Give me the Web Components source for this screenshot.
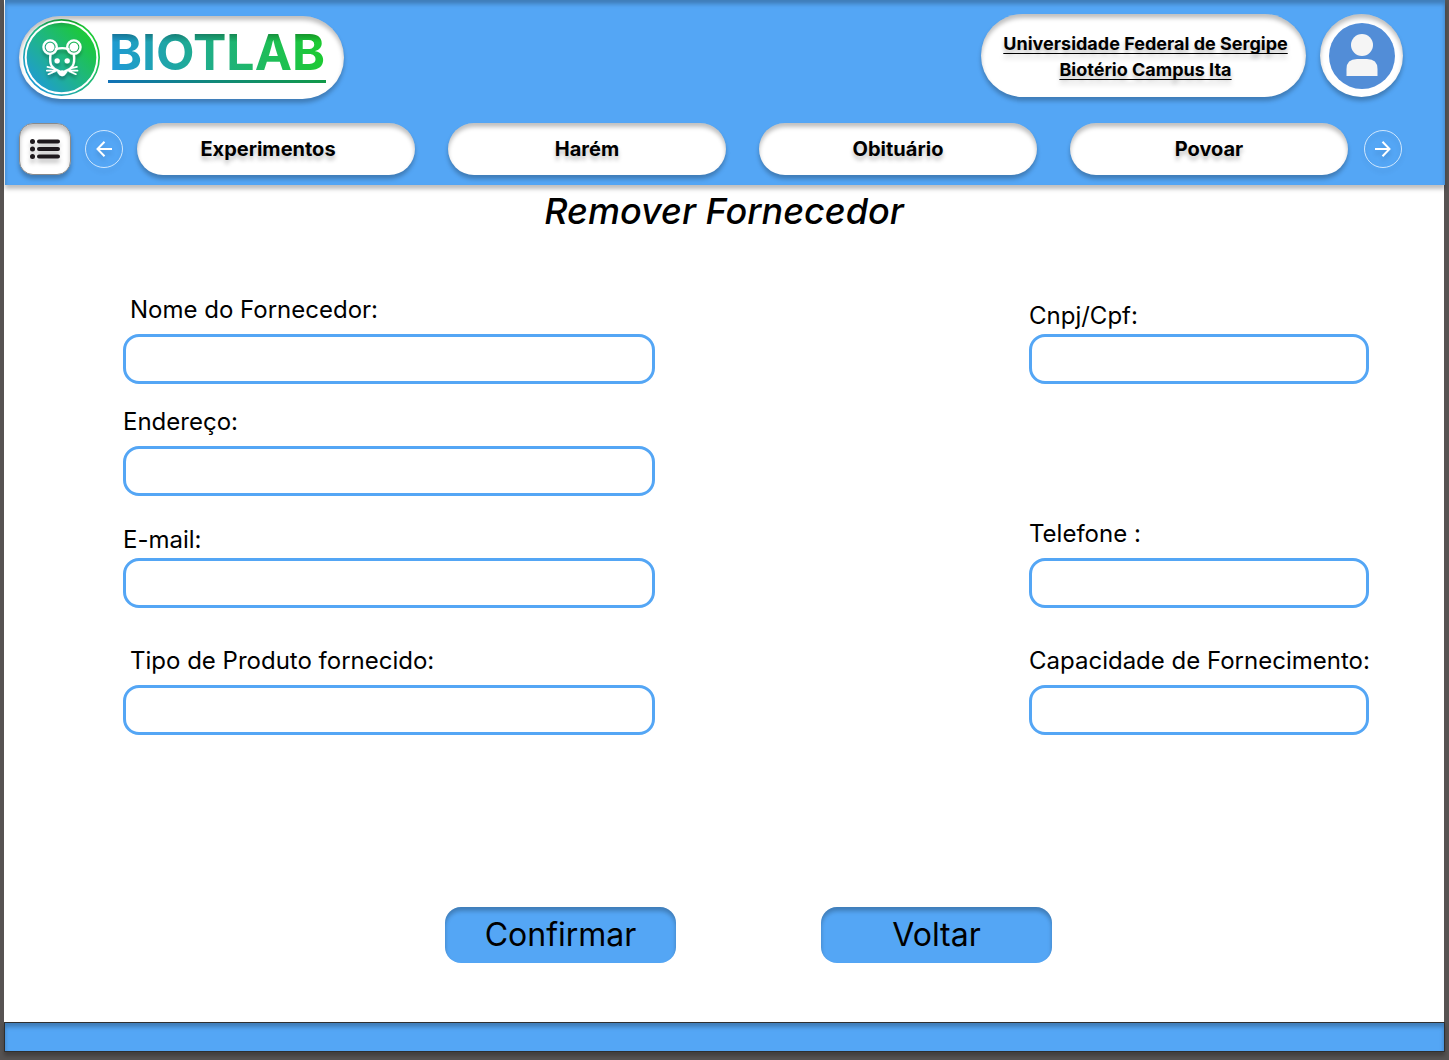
<!DOCTYPE html>
<html lang="pt-BR">
<head>
<meta charset="utf-8">
<title>BIOTLAB - Remover Fornecedor</title>
<style>
  body {
    --blue: #54a6f5;
    --inset: inset 0 4px 4px rgba(0, 0, 0, .25);
    --drop: 0 4px 4px rgba(0, 0, 0, .25);
    margin: 0;
    background: #575352;
    color: #000;
    font-family: Inter, "Liberation Sans", sans-serif;
  }
</style>
</head>
<body>
<bio-page>
  <bio-header slot="header">
    <bio-logo slot="brand">BIOTLAB</bio-logo>
    <bio-unit slot="account"><span>Universidade Federal de Sergipe</span><span>Biotério Campus Ita</span></bio-unit>
    <bio-avatar slot="account"></bio-avatar>
    <bio-menu-button slot="nav"></bio-menu-button>
    <bio-arrow slot="nav" direction="left"></bio-arrow>
    <bio-tabs slot="nav">
      <bio-tab first>Experimentos</bio-tab>
      <bio-tab>Harém</bio-tab>
      <bio-tab>Obituário</bio-tab>
      <bio-tab>Povoar</bio-tab>
    </bio-tabs>
    <bio-arrow slot="nav" direction="right"></bio-arrow>
  </bio-header>
  <bio-form heading="Remover Fornecedor">
    <bio-field indent>Nome do Fornecedor:</bio-field>
    <bio-field close>Cnpj/Cpf:</bio-field>
    <bio-field class="start">Endereço:</bio-field>
    <bio-field class="start" close>E-mail:</bio-field>
    <bio-field>Telefone :</bio-field>
    <bio-field class="spaced" indent>Tipo de Produto fornecido:</bio-field>
    <bio-field class="spaced">Capacidade de Fornecimento:</bio-field>
    <bio-button slot="actions">Confirmar</bio-button>
    <bio-button slot="actions">Voltar</bio-button>
  </bio-form>
</bio-page>

<script>
const define = (name, html, setup) => {
  const template = document.createElement('template');
  template.innerHTML = html;
  customElements.define(name, class extends HTMLElement {
    constructor() {
      super();
      this.attachShadow({ mode: 'open' }).append(template.content.cloneNode(true));
    }
    connectedCallback() {
      if (setup) setup(this, this.shadowRoot);
    }
  });
};

define('bio-page', `
  <style>
    :host { display: flex; flex-direction: column; box-sizing: border-box; min-height: 100vh; padding: 0 5px 8px 4px; }
    .sheet { flex: 1; display: flex; flex-direction: column; background: #fff; }
    main { flex: 1; }
    footer { box-sizing: border-box; height: 30px; margin-right: -1px; background: var(--blue); border: 1px solid #2f2f2f; box-shadow: var(--inset), var(--drop); }
  </style>
  <div class="sheet">
    <slot name="header"></slot>
    <main><slot></slot></main>
    <footer></footer>
  </div>`);

define('bio-header', `
  <style>
    :host { display: block; margin: 0 -1px 0 1px; padding: 14px 42px 10px 14px; background: var(--blue); box-shadow: var(--inset), var(--drop); }
    .top { display: flex; justify-content: space-between; height: 85px; margin-bottom: 24px; }
    .brand { display: flex; align-items: flex-end; }
    .account { display: flex; align-items: flex-start; gap: 14px; }
    nav { display: flex; align-items: center; gap: 14px; padding-right: 1px; }
  </style>
  <header>
    <div class="top">
      <div class="brand"><slot name="brand"></slot></div>
      <div class="account"><slot name="account"></slot></div>
    </div>
    <nav><slot name="nav"></slot></nav>
  </header>`);

define('bio-logo', `
  <style>
    :host { display: flex; align-items: center; box-sizing: border-box; width: 325px; height: 83px; padding: 0 18px 0 4px; gap: 8px; border-radius: 42px; background: #fff; box-shadow: var(--inset), var(--drop); }
    svg { flex: none; width: 77px; height: 77px; }
    .word { flex: 1; margin-bottom: 6px; padding-bottom: 4px; border-bottom: 3px solid; border-image: linear-gradient(90deg, #1272b8, #128a78 50%, #129a48) 1; }
    .name { display: block; font-size: 50px; line-height: 52px; margin-bottom: -2px; font-weight: 700; text-align: center; color: transparent; background: linear-gradient(rgba(0, 0, 0, .25) 8px, transparent 16px), linear-gradient(75deg, #1f98dc, #1fb07f 50%, #1ccd2a); -webkit-background-clip: text; background-clip: text; }
  </style>
  <svg viewBox="40 27 230 230" aria-hidden="true">
    <defs>
      <linearGradient id="g" x1="0.1" y1="0.9" x2="0.85" y2="0.2">
        <stop offset="0" stop-color="#1f98dc"/><stop offset="0.5" stop-color="#1fb48a"/><stop offset="1" stop-color="#1cc936"/>
      </linearGradient>
      <linearGradient id="s" x1="0" y1="0" x2="0" y2="1">
        <stop offset="0" stop-opacity=".25"/><stop offset=".12" stop-opacity="0"/>
      </linearGradient>
      <filter id="d" x="-20%" y="-20%" width="140%" height="150%"><feDropShadow dx="0" dy="10" stdDeviation="5" flood-opacity=".25"/></filter>
    </defs>
    <circle cx="155" cy="142" r="115" fill="url(#g)"/>
    <circle cx="155" cy="142" r="115" fill="url(#s)"/>
    <circle cx="155" cy="142" r="107" fill="none" stroke="#fff" stroke-width="6"/>
    <g filter="url(#d)">
      <g fill="none" stroke="#fff" stroke-width="7" stroke-linecap="round">
        <circle cx="121" cy="111" r="20"/><circle cx="192" cy="111" r="20"/>
        <path d="M138 117Q157 111 176 117M122 133Q119 157 126 168Q134 180 148 183M192 133Q195 157 188 168Q180 180 166 183"/>
        <path d="M113 170L130 174M111 181H134M116 192L136 183M201 170L184 174M203 181H180M198 192L178 183" stroke-width="5"/>
      </g>
      <g fill="#fff">
        <circle cx="121" cy="111" r="13"/><circle cx="192" cy="111" r="13"/>
        <circle cx="142" cy="152" r="8"/><circle cx="172" cy="152" r="8"/>
        <path d="M142 186Q157 174 172 186L165 195Q157 201 149 195Z"/>
      </g>
    </g>
  </svg>
  <div class="word"><span class="name"><slot></slot></span></div>`);

define('bio-unit', `
  <style>
    :host { display: block; }
    a { display: flex; flex-direction: column; align-items: center; justify-content: center; box-sizing: border-box; width: 325px; height: 83px; padding: 2px 0 0 4px; border-radius: 42px; background: #fff; box-shadow: var(--inset), var(--drop); color: #000; font-size: 18px; line-height: 26px; font-weight: 700; text-decoration: none; text-shadow: var(--drop); }
    ::slotted(span) { text-decoration: underline 1px; text-underline-offset: 3px; text-decoration-skip-ink: none; }
  </style>
  <a href="#unidade"><slot></slot></a>`);

define('bio-avatar', `
  <style>
    :host { display: block; }
    button { display: flex; align-items: center; justify-content: center; width: 83px; height: 83px; padding: 0; border: 0; border-radius: 50%; background: #fff; box-shadow: var(--inset), var(--drop); }
    svg { width: 66px; height: 66px; }
  </style>
  <button type="button" aria-label="Perfil">
    <svg viewBox="0 0 66 66" aria-hidden="true"><circle cx="33" cy="33" r="33" fill="#528dd7"/><circle cx="33" cy="22" r="11" fill="#f5f5f5"/><path d="M17.500 53V46Q17.500 36 28 36H38Q48.500 36 48.500 46V53Z" fill="#f5f5f5"/></svg>
  </button>`);

define('bio-menu-button', `
  <style>
    :host { display: block; }
    button { display: flex; align-items: center; justify-content: center; width: 52px; height: 52px; padding: 0; border: 1px solid #8a8a8a; border-radius: 14px; background: #fff; box-shadow: var(--inset), var(--drop); }
    svg { display: block; width: 32px; height: 24px; overflow: visible; filter: drop-shadow(0 4px 2px rgba(0, 0, 0, .25)); }
  </style>
  <button type="button" aria-label="Menu">
    <svg viewBox="0 0 32 24" fill="none" stroke="#1e191d" stroke-linecap="round" aria-hidden="true"><path d="M10 4.500H29M10 12H29M10 19.500H29" stroke-width="4"/><path d="M3.500 4.500h.01M3.500 12h.01M3.500 19.500h.01" stroke-width="5"/></svg>
  </button>`);

define('bio-arrow', `
  <style>
    :host { display: block; }
    :host([direction="right"]) { margin-left: 2px; }
    :host([direction="right"]) svg { transform: scaleX(-1); }
    button { display: flex; align-items: center; justify-content: center; width: 38px; height: 38px; padding: 0; border: 1px solid #cfe6fc; border-radius: 50%; background: none; filter: drop-shadow(0 4px 2px rgba(0, 0, 0, .12)); }
    svg { width: 16px; height: 16px; }
  </style>
  <button type="button">
    <svg viewBox="0 0 16 16" fill="none" stroke="#fff" stroke-width="2" aria-hidden="true"><path d="M16 8H1.500M8.500 .8L1.500 8L8.500 15.200"/></svg>
  </button>`, (host, root) => {
  root.querySelector('button').setAttribute('aria-label', host.getAttribute('direction') === 'left' ? 'Anterior' : 'Próximo');
});

define('bio-tabs', `
  <style>
    :host { flex: 1; display: grid; grid-template-columns: repeat(4, 1fr); gap: 33px; }
  </style>
  <slot></slot>`);

define('bio-tab', `
  <style>
    :host { display: block; }
    button { display: block; width: 100%; height: 52px; padding: 0; border: 0; border-radius: 26px; background: #fff; box-shadow: var(--inset), var(--drop); color: #000; font: inherit; font-size: 20px; line-height: 24px; font-weight: 700; text-shadow: var(--drop); }
    :host([first]) button { padding-right: 16px; }
  </style>
  <button type="button"><slot></slot></button>`);

define('bio-form', `
  <style>
    :host { display: block; padding: 4px 0 59px; }
    h1 { margin: 0; text-align: center; font-size: 36px; line-height: 44px; font-weight: 500; font-style: italic; }
    .fields { display: grid; grid-template-columns: 532fr 340fr; column-gap: 374px; row-gap: 23px; align-items: end; margin-top: 62px; padding: 0 75px 0 119px; }
    ::slotted(.start) { grid-column: 1; }
    ::slotted(.spaced) { margin-top: 15px; }
    .actions { display: flex; justify-content: center; gap: 145px; margin-top: 172px; padding-left: 49px; }
  </style>
  <form>
    <h1></h1>
    <div class="fields"><slot></slot></div>
    <div class="actions"><slot name="actions"></slot></div>
  </form>`, (host, root) => {
  root.querySelector('h1').textContent = host.getAttribute('heading');
});

define('bio-field', `
  <style>
    :host { display: block; min-width: 0; }
    label { display: block; height: 30px; margin-bottom: 9px; font-size: 24px; line-height: 30px; white-space: nowrap; }
    :host([close]) label { margin-bottom: 3px; }
    :host([indent]) label { padding-left: 7px; }
    input { display: block; box-sizing: border-box; width: 100%; height: 50px; padding: 0 16px; border: 3px solid var(--blue); border-radius: 16px; background: #fff; font: inherit; font-size: 24px; outline: none; }
  </style>
  <label for="control"><slot></slot></label>
  <input id="control" type="text">`);

define('bio-button', `
  <style>
    :host { display: block; }
    button { display: block; width: 231px; height: 56px; padding: 0; border: 0; border-radius: 16px; background: var(--blue); box-shadow: var(--inset); color: #000; font: inherit; font-size: 32px; line-height: 40px; }
  </style>
  <button type="button"><slot></slot></button>`);
</script>
</body>
</html>
